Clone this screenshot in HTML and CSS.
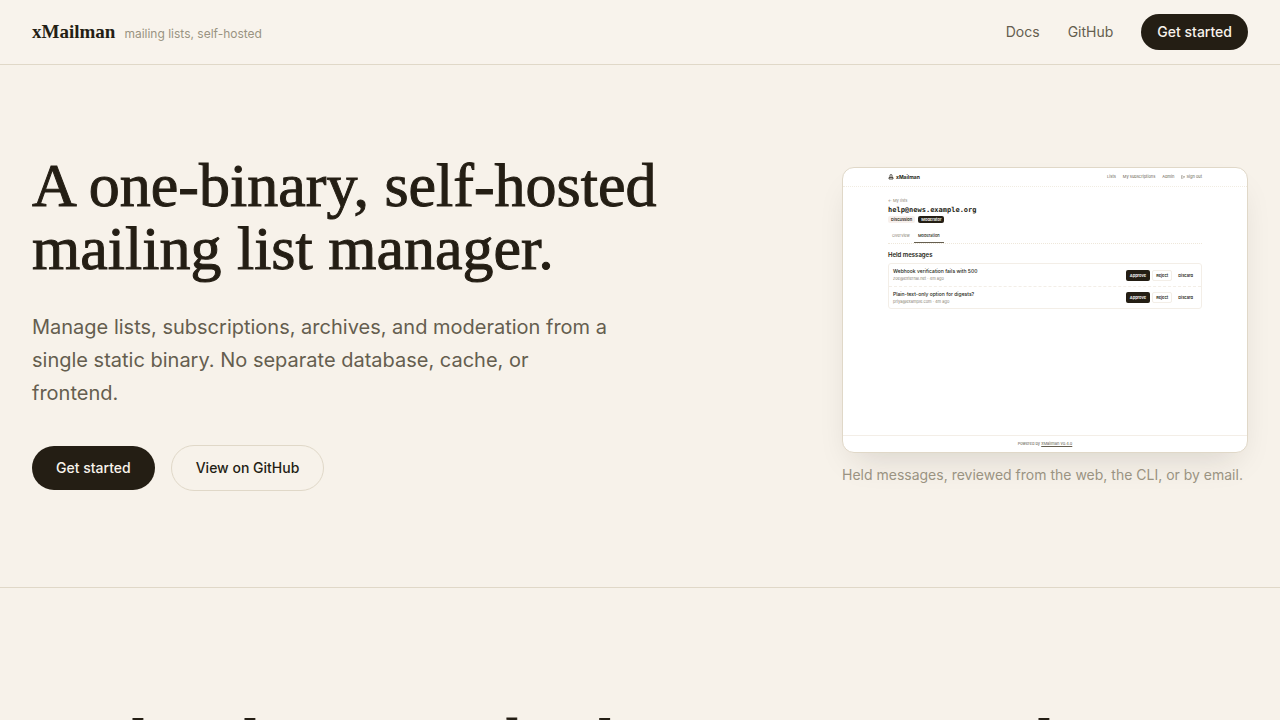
FILE: index.html
```html
<!DOCTYPE html>
<html lang="en">
<head>
<meta charset="utf-8">
<title>xMailman</title>
<link rel="stylesheet" href="styles.css">
</head>
<body>
<header class="site-header">
  <div class="brand"><a class="brand-name" href="#">xMailman</a><span class="tagline">mailing lists, self-hosted</span></div>
  <nav class="site-nav">
    <a href="#">Docs</a>
    <a href="#">GitHub</a>
    <a class="button button-small" href="#">Get started</a>
  </nav>
</header>
<main>
  <section class="hero">
    <div class="hero-copy">
      <h1 class="display">A one-binary, self-hosted<br>mailing list manager.</h1>
      <p class="lead">Manage lists, subscriptions, archives, and moderation from a single static binary. No separate database, cache, or frontend.</p>
      <div class="actions">
        <a class="button" href="#">Get started</a>
        <a class="button button-outline" href="#">View on GitHub</a>
      </div>
    </div>
    <figure class="preview">
      <div class="app">
        <div class="app-header">
          <div class="app-brand">
            <svg class="app-logo" viewBox="0 0 24 24" fill="none" stroke="currentColor" stroke-width="3"><path d="M8 13V6a4 4 0 0 1 8 0v7M4 14h16v6H4z"/></svg>
            xMailman
          </div>
          <div class="app-nav">
            <a href="#">Lists</a><a href="#">My subscriptions</a><a href="#">Admin</a>
            <a href="#"><svg class="app-exit" viewBox="0 0 24 24" fill="none" stroke="currentColor" stroke-width="3"><path d="M9 3H4v18h5M9 12h12M16 7l5 5-5 5"/></svg> Sign out</a>
          </div>
        </div>
        <div class="app-main">
          <a class="back" href="#">← My lists</a>
          <div class="list-name">help@news.example.org</div>
          <div class="badges"><span class="badge">Discussion</span><span class="badge badge-dark">Moderator</span></div>
          <div class="tabs"><a class="tab" href="#">Overview</a><a class="tab tab-active" href="#">Moderation</a></div>
          <h2 class="held-title">Held messages</h2>
          <div class="held">
            <div class="message">
              <div class="message-text"><b>Webhook verification fails with 500</b><span>zoe@external.net · 4m ago</span></div>
              <div class="message-actions"><button class="approve">Approve</button><button class="reject">Reject</button><button>Discard</button></div>
            </div>
            <div class="message">
              <div class="message-text"><b>Plain-text-only option for digests?</b><span>priya@example.com · 4m ago</span></div>
              <div class="message-actions"><button class="approve">Approve</button><button class="reject">Reject</button><button>Discard</button></div>
            </div>
          </div>
        </div>
        <div class="app-footer">Powered by <a href="#">xMailman v0.4.0</a></div>
      </div>
      <figcaption>Held messages, reviewed from the web, the CLI, or by email.</figcaption>
    </figure>
  </section>
  <section class="next">
    <h2 class="display">Mailing lists served online, in your own line</h2>
  </section>
</main>
</body>
</html>
```

FILE: styles.css
```css
* { box-sizing: border-box; }
body {
  margin: 0;
  background: #f7f2ea;
  color: #241e14;
  font-family: Inter, "Liberation Sans", sans-serif;
  font-size: 14px;
  line-height: 20px;
}
a { color: inherit; text-decoration: none; }
h1, h2, p, figure { margin: 0; }

.site-header {
  display: flex;
  align-items: center;
  justify-content: space-between;
  padding: 14px 32px;
  border-bottom: 1px solid #e0d8c8;
  background: #f8f3ec;
}
.brand { display: flex; align-items: baseline; gap: 9px; }
.brand-name { font: bold 19px/22px "Liberation Serif", serif; }
.tagline { font-size: 12px; color: #9a9382; }
.site-nav { display: flex; align-items: center; gap: 28px; color: #655e4f; }
.button {
  padding: 12px 24px;
  border-radius: 24px;
  background: #241e14;
  color: #f8f3ec;
  font-weight: 500;
}
.button-small { padding: 8px 16px; }
.button-outline {
  border: 1px solid #e0d8c8;
  background: transparent;
  color: #241e14;
}

.display {
  font: 500 62px/63px "Liberation Serif", serif;
  -webkit-text-stroke: 1px currentColor;
}
.hero {
  display: grid;
  grid-template-columns: minmax(0, 1fr) minmax(0, 406px);
  gap: 64px;
  align-items: start;
  padding: 89px 32px 96px;
  border-bottom: 1px solid #e0d8c8;
}
.lead {
  max-width: 576px;
  margin: 31px 0 35px;
  color: #655e4f;
  font-size: 20px;
  line-height: 33px;
}
.actions { display: flex; align-items: center; gap: 16px; }

.preview { margin-top: 13px; }
.app {
  display: flex;
  flex-direction: column;
  aspect-ratio: 406 / 286;
  overflow: hidden;
  border: 1px solid #e0d8c8;
  border-radius: 12px;
  background: #fff;
  box-shadow: 0 16px 32px -12px rgba(36, 30, 20, 0.15);
  font-size: 4px;
  line-height: 6px;
}
figcaption { margin-top: 12px; color: #9a9382; }
.app-header {
  display: flex;
  align-items: center;
  justify-content: space-between;
  height: 19px;
  padding: 0 45px;
  border-bottom: 1px dotted #f1ece2;
}
.app-brand { display: flex; align-items: center; gap: 2px; font-size: 5px; font-weight: 700; }
.app-logo { width: 6px; height: 6px; }
.app-nav { display: flex; gap: 7px; color: #655e4f; }
.app-exit { width: 4px; height: 4px; vertical-align: middle; }
.app-main { flex: 1; padding: 11px 45px 0; }
.back { display: block; color: #8a8374; }
.list-name { font: bold 7px/12px "DejaVu Sans Mono", monospace; }
.badges { display: flex; gap: 3px; }
.badge { padding: 0 3px; border-radius: 2px; background: #f7f0ec; font-weight: 600; line-height: 7px; }
.badge-dark { background: #241e14; color: #fff; }
.tabs { display: flex; margin-top: 8px; border-bottom: 1px dotted #eee7da; }
.tab { padding: 2px 4px 3px; color: #8a8374; }
.tab-active { border-bottom: 1px solid #655e4f; color: #241e14; font-weight: 500; }
.held-title { margin: 7px 0 4px; font-size: 6px; font-weight: 600; line-height: 8px; }
.held { border: 1px solid #f3eee7; border-radius: 3px; }
.message { display: flex; align-items: center; justify-content: space-between; height: 22px; padding: 0 4px; }
.message + .message { border-top: 1px dashed #f3eee7; }
.message-text { display: flex; flex-direction: column; gap: 1px; }
.message-text b { font-size: 5px; font-weight: 500; line-height: 7px; }
.message-text span { color: #8a8374; }
.message-actions { display: flex; gap: 2px; }
.message-actions button {
  padding: 1px 3px;
  border: 1px solid transparent;
  border-radius: 2px;
  background: transparent;
  color: #241e14;
  font: 600 4px/7px Inter, sans-serif;
}
.message-actions .approve { background: #241e14; color: #fff; }
.message-actions .reject { border: 1px solid #f3eee7; }
.app-footer { padding: 5px; border-top: 1px solid #f3eee7; color: #655e4f; text-align: center; }
.app-footer a { text-decoration: underline; }

.next { padding: 121px 32px; }
```
